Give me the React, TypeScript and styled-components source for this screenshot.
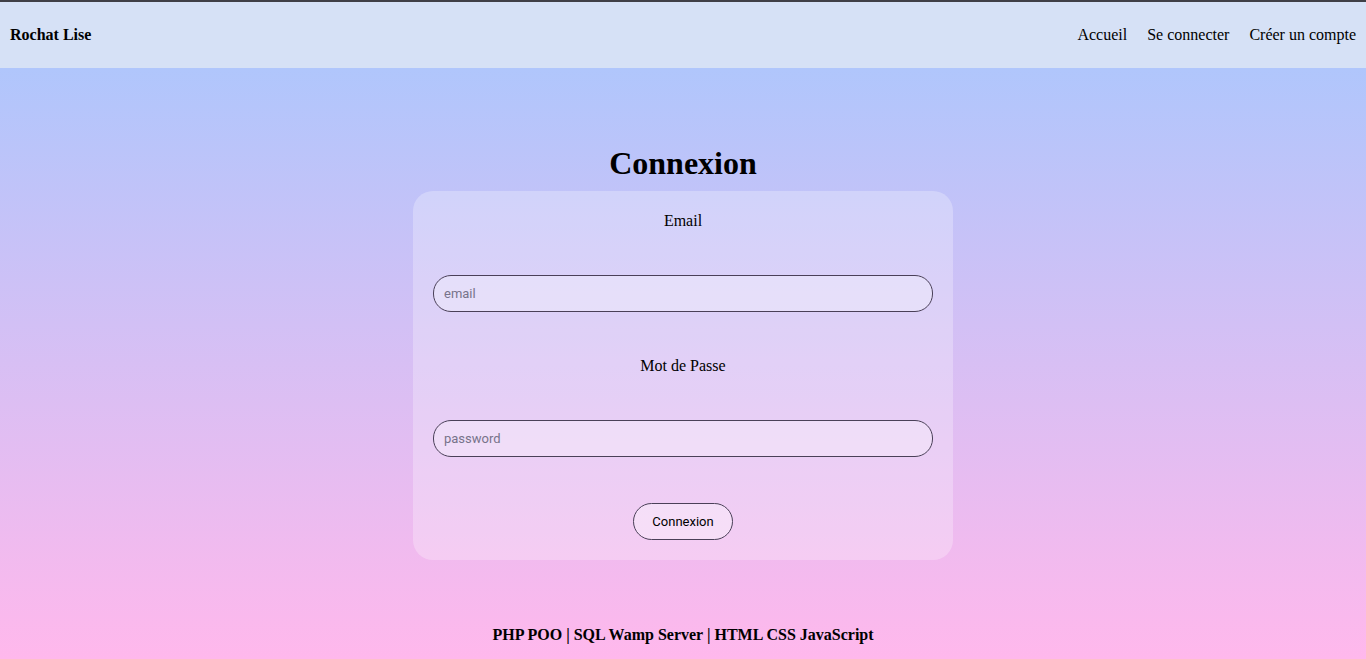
import React from "react";
import styled, { createGlobalStyle } from "styled-components";

const Global = createGlobalStyle`
  html, body { margin: 0; padding: 0; }
  body {
    font-family: "Liberation Serif", "Times New Roman", serif;
    font-size: 16px;
    color: #000;
    background: #fbb8ec;
  }
  * { box-sizing: border-box; }
`;

const Page = styled.div`
  min-height: 659px;
  display: flex;
  flex-direction: column;
  background: linear-gradient(180deg, #b0c6fc 68px, #ffb8ec 100%);
`;

const Header = styled.header`
  height: 68px;
  border-top: 2px solid #3f3f46;
  background: #d6e1f6;
  display: flex;
  align-items: center;
  justify-content: space-between;
  padding: 0 10px;
`;

const Brand = styled.div`
  font-weight: bold;
  font-size: 16px;
`;

const Nav = styled.nav`
  display: flex;
  gap: 20px;
`;

const NavLink = styled.a`
  color: #000;
  text-decoration: none;
  font-size: 16px;
`;

const Main = styled.main`
  display: flex;
  flex-direction: column;
  align-items: center;
  padding-top: 77px;
`;

const Title = styled.h1`
  margin: 0 0 9px;
  font-size: 32px;
  line-height: 37px;
  font-weight: bold;
`;

const Card = styled.form`
  width: 540px;
  padding: 21px 20px 20px;
  border-radius: 20px;
  background: rgba(255, 255, 255, 0.27);
  display: flex;
  flex-direction: column;
  align-items: center;
`;

const Label = styled.label<{ $after: number }>`
  font-size: 16px;
  line-height: 18px;
  margin-bottom: ${(p) => p.$after}px;
`;

const Input = styled.input<{ $after: number }>`
  width: 500px;
  height: 37px;
  border: 1px solid #4a4058;
  border-radius: 18px;
  background: rgba(255, 255, 255, 0.3);
  padding: 0 10px;
  font-family: Roboto, "Noto Sans", sans-serif;
  font-size: 13px;
  margin-bottom: ${(p) => p.$after}px;
  outline: none;
  &::placeholder { color: #77738a; }
`;

const Button = styled.button`
  width: 100px;
  height: 37px;
  border: 1px solid #4a4058;
  border-radius: 19px;
  background: rgba(255, 255, 255, 0.35);
  font-family: Roboto, "Noto Sans", sans-serif;
  font-size: 13px;
  color: #000;
`;

const Footer = styled.footer`
  margin-top: 66px;
  text-align: center;
  font-weight: bold;
  font-size: 16px;
  line-height: 18px;
  padding-bottom: 15px;
`;

export default function App() {
  return (
    <>
      <Global />
      <Page>
        <Header>
          <Brand>Rochat Lise</Brand>
          <Nav>
            <NavLink href="#">Accueil</NavLink>
            <NavLink href="#">Se connecter</NavLink>
            <NavLink href="#">Créer un compte</NavLink>
          </Nav>
        </Header>
        <Main>
          <Title>Connexion</Title>
          <Card onSubmit={(e) => e.preventDefault()}>
            <Label $after={45}>Email</Label>
            <Input $after={45} type="email" placeholder="email" />
            <Label $after={45}>Mot de Passe</Label>
            <Input $after={46} type="password" placeholder="password" />
            <Button type="submit">Connexion</Button>
          </Card>
          <Footer>PHP POO | SQL Wamp Server | HTML CSS JavaScript</Footer>
        </Main>
      </Page>
    </>
  );
}
